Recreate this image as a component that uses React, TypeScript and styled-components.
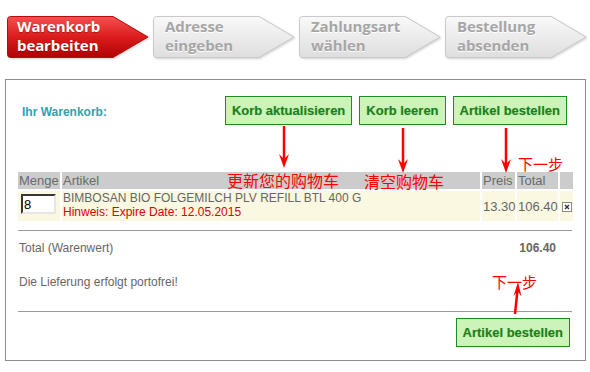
import * as React from 'react';
import styled, { createGlobalStyle } from 'styled-components';

const GlobalStyle = createGlobalStyle`
  html, body {
    margin: 0;
    padding: 0;
    background: #fff;
  }
  body {
    font-family: "Liberation Sans", Arial, sans-serif;
  }
`;

const Page = styled.div`
  position: relative;
  width: 590px;
  height: 372px;
  overflow: hidden;
`;

/* checkout steps */

const Steps = styled.div`
  display: flex;
  gap: 4px;
  padding: 16px 0 0 7px;
  height: 42px;
`;

const Step = styled.div`
  position: relative;
  flex: none;
  width: 142px;
  height: 42px;
`;

const StepShape = styled.svg`
  position: absolute;
  left: 0;
  top: 0;
  filter: drop-shadow(1px 1px 1px rgba(0, 0, 0, 0.18));
`;

const StepLabel = styled.div<{ active?: boolean }>`
  position: relative;
  padding: 1px 0 0 ${(p) => (p.active ? 10 : 12)}px;
  font-family: "Open Sans", "DejaVu Sans", sans-serif;
  font-weight: 700;
  font-size: 15px;
  line-height: 19px;
  letter-spacing: -0.1px;
  color: ${(p) => (p.active ? '#fff' : '#a6a6a6')};
  text-shadow: ${(p) =>
    p.active ? '0 1px 1px rgba(90, 0, 0, 0.45)' : '0 1px 0 #fff'};
`;

const tabPath =
  'M3.5 0.5 H106 L141 21 L106 41.5 H3.5 Q0.5 41.5 0.5 38.5 V3.5 Q0.5 0.5 3.5 0.5 Z';

const StepTab = ({
  active,
  id,
  lines,
}: {
  active?: boolean;
  id: string;
  lines: [string, string];
}) => (
  <Step>
    <StepShape width="142" height="42" viewBox="0 0 142 42">
      <defs>
        <linearGradient id={id} x1="0" y1="0" x2="0" y2="1">
          {active ? (
            <>
              <stop offset="0" stopColor="#f65050" />
              <stop offset="0.5" stopColor="#db1c1c" />
              <stop offset="1" stopColor="#b00202" />
            </>
          ) : (
            <>
              <stop offset="0" stopColor="#f9f9f9" />
              <stop offset="1" stopColor="#dedede" />
            </>
          )}
        </linearGradient>
      </defs>
      <path
        d={tabPath}
        fill={`url(#${id})`}
        stroke={active ? '#b40d0d' : '#c9c9c9'}
        strokeWidth="1"
      />
    </StepShape>
    <StepLabel active={active}>
      {lines[0]}
      <br />
      {lines[1]}
    </StepLabel>
  </Step>
);

/* cart panel */

const Panel = styled.div`
  margin: 21px 4px 0 5px;
  border: 1px solid #8e8e8e;
  padding: 16px 12px 13px 12px;
`;

const Toolbar = styled.div`
  display: flex;
  align-items: center;
  justify-content: space-between;
  height: 29px;
`;

const CartTitle = styled.div`
  padding: 3px 0 0 4px;
  font-size: 12px;
  font-weight: 700;
  color: #34a0b3;
`;

const ButtonGroup = styled.div`
  display: flex;
  gap: 7px;
  margin-right: 6px;
`;

const GreenButton = styled.button`
  height: 29px;
  padding: 0 6px;
  border: 1px solid #1f8c1f;
  background: #cdf4b8;
  color: #1c7f1c;
  font-family: "Liberation Sans", Arial, sans-serif;
  font-size: 13px;
  font-weight: 700;
  text-shadow: 0 0 1px rgba(40, 140, 40, 0.35);
  cursor: pointer;
`;

const CartTable = styled.table`
  border-collapse: separate;
  border-spacing: 2px;
  margin: 45px -2px 0 -2px;
  width: calc(100% + 4px);
  table-layout: fixed;
`;

const HeadCell = styled.th<{ w?: number }>`
  ${(p) => (p.w ? `width: ${p.w}px;` : '')}
  height: 17px;
  padding: 0 1px;
  background: #cccccc;
  color: #6a6a6a;
  font-size: 13px;
  font-weight: 400;
  text-align: left;
  line-height: 17px;
  white-space: nowrap;
`;

const Cell = styled.td<{ top?: boolean }>`
  height: 30px;
  padding: 0 1px;
  background: #faf8e0;
  color: #666;
  font-size: 13px;
  vertical-align: ${(p) => (p.top ? 'top' : 'middle')};
  white-space: nowrap;
`;

const QtyInput = styled.input`
  box-sizing: border-box;
  display: block;
  width: 35px;
  height: 20px;
  margin: 3px 0 0 2px;
  padding: 0 1px;
  border: 2px inset #e6e6e6;
  border-top-color: #8a8a8a;
  border-left-color: #8a8a8a;
  background: #fff;
  font-family: "Liberation Sans", Arial, sans-serif;
  font-size: 13px;
  color: #000;
`;

const ProductName = styled.div`
  font-size: 12px;
  line-height: 14px;
  color: #666;
`;

const ProductNote = styled.div`
  font-size: 12px;
  line-height: 14px;
  color: #dd0000;
`;

const DeleteBox = styled.svg`
  display: block;
  margin: 1px 0 0 1px;
`;

const Rule = styled.hr`
  border: 0;
  border-top: 1px solid #9a9a9a;
  height: 0;
  margin: ${(p: { gap: number }) => p.gap}px 1px 0 0;
`;

const TotalRow = styled.div`
  display: flex;
  justify-content: space-between;
  margin-top: 10px;
  padding: 0 17px 0 1px;
  font-size: 12px;
  line-height: 14px;
  color: #666;
`;

const TotalValue = styled.span`
  font-weight: 700;
`;

const Note = styled.div`
  margin-top: 20px;
  padding-left: 1px;
  font-size: 12px;
  line-height: 14px;
  color: #666;
`;

const Footer = styled.div`
  display: flex;
  justify-content: flex-end;
  margin-top: 6px;
  padding-right: 3px;
`;

/* red annotations drawn over the screenshot */

const Remark = styled.div<{ x: number; y: number; size: number }>`
  position: absolute;
  left: ${(p) => p.x}px;
  top: ${(p) => p.y}px;
  font-family: "Noto Sans CJK SC", sans-serif;
  font-size: ${(p) => p.size}px;
  line-height: ${(p) => p.size}px;
  color: #ff0000;
  white-space: nowrap;
`;

const ArrowSvg = styled.svg<{ x: number; y: number }>`
  position: absolute;
  left: ${(p) => p.x}px;
  top: ${(p) => p.y}px;
  overflow: visible;
`;

const DownArrow = ({ x, y, h }: { x: number; y: number; h: number }) => (
  <ArrowSvg x={x - 6} y={y} width="12" height={h}>
    <line x1="6" y1="0" x2="6" y2={h - 8} stroke="#ff0000" strokeWidth="2.5" />
    <polygon
      points={`6,${h} 1,${h - 14} 6,${h - 9} 11,${h - 14}`}
      fill="#ff0000"
    />
  </ArrowSvg>
);

const UpArrow = () => (
  <ArrowSvg x={510} y={282} width="14" height="32">
    <line x1="5" y1="32" x2="7.5" y2="8" stroke="#ff0000" strokeWidth="2.5" />
    <polygon points="8,0 3.5,14 7.6,9 11.5,14.5" fill="#ff0000" />
  </ArrowSvg>
);

export default function App() {
  return (
    <Page>
      <GlobalStyle />
      <Steps>
        <StepTab active id="g1" lines={['Warenkorb', 'bearbeiten']} />
        <StepTab id="g2" lines={['Adresse', 'eingeben']} />
        <StepTab id="g3" lines={['Zahlungsart', 'wählen']} />
        <StepTab id="g4" lines={['Bestellung', 'absenden']} />
      </Steps>

      <Panel>
        <Toolbar>
          <CartTitle>Ihr Warenkorb:</CartTitle>
          <ButtonGroup>
            <GreenButton>Korb aktualisieren</GreenButton>
            <GreenButton>Korb leeren</GreenButton>
            <GreenButton>Artikel bestellen</GreenButton>
          </ButtonGroup>
        </Toolbar>

        <CartTable>
          <thead>
            <tr>
              <HeadCell w={40}>Menge</HeadCell>
              <HeadCell>Artikel</HeadCell>
              <HeadCell w={31}>Preis</HeadCell>
              <HeadCell w={39}>Total</HeadCell>
              <HeadCell w={11}></HeadCell>
            </tr>
          </thead>
          <tbody>
            <tr>
              <Cell top>
                <QtyInput defaultValue="8" />
              </Cell>
              <Cell top>
                <ProductName>BIMBOSAN BIO FOLGEMILCH PLV REFILL BTL 400 G</ProductName>
                <ProductNote>Hinweis: Expire Date: 12.05.2015</ProductNote>
              </Cell>
              <Cell>13.30</Cell>
              <Cell>106.40</Cell>
              <Cell>
                <DeleteBox width="10" height="10" viewBox="0 0 10 10">
                  <rect x="0.5" y="0.5" width="9" height="9" fill="#fff" stroke="#8a8a8a" />
                  <path d="M3 3 L7 7 M7 3 L3 7" stroke="#333" strokeWidth="1.4" />
                </DeleteBox>
              </Cell>
            </tr>
          </tbody>
        </CartTable>

        <Rule gap={7} />
        <TotalRow>
          <span>Total (Warenwert)</span>
          <TotalValue>106.40</TotalValue>
        </TotalRow>
        <Note>Die Lieferung erfolgt portofrei!</Note>
        <Rule gap={22} />
        <Footer>
          <GreenButton>Artikel bestellen</GreenButton>
        </Footer>
      </Panel>

      <DownArrow x={284} y={126} h={42} />
      <Remark x={227} y={172} size={16}>更新您的购物车</Remark>
      <DownArrow x={403} y={128} h={45} />
      <Remark x={364} y={173} size={16}>清空购物车</Remark>
      <DownArrow x={506} y={128} h={45} />
      <Remark x={518} y={156} size={15}>下一步</Remark>
      <Remark x={492} y={274} size={15}>下一步</Remark>
      <UpArrow />
    </Page>
  );
}
